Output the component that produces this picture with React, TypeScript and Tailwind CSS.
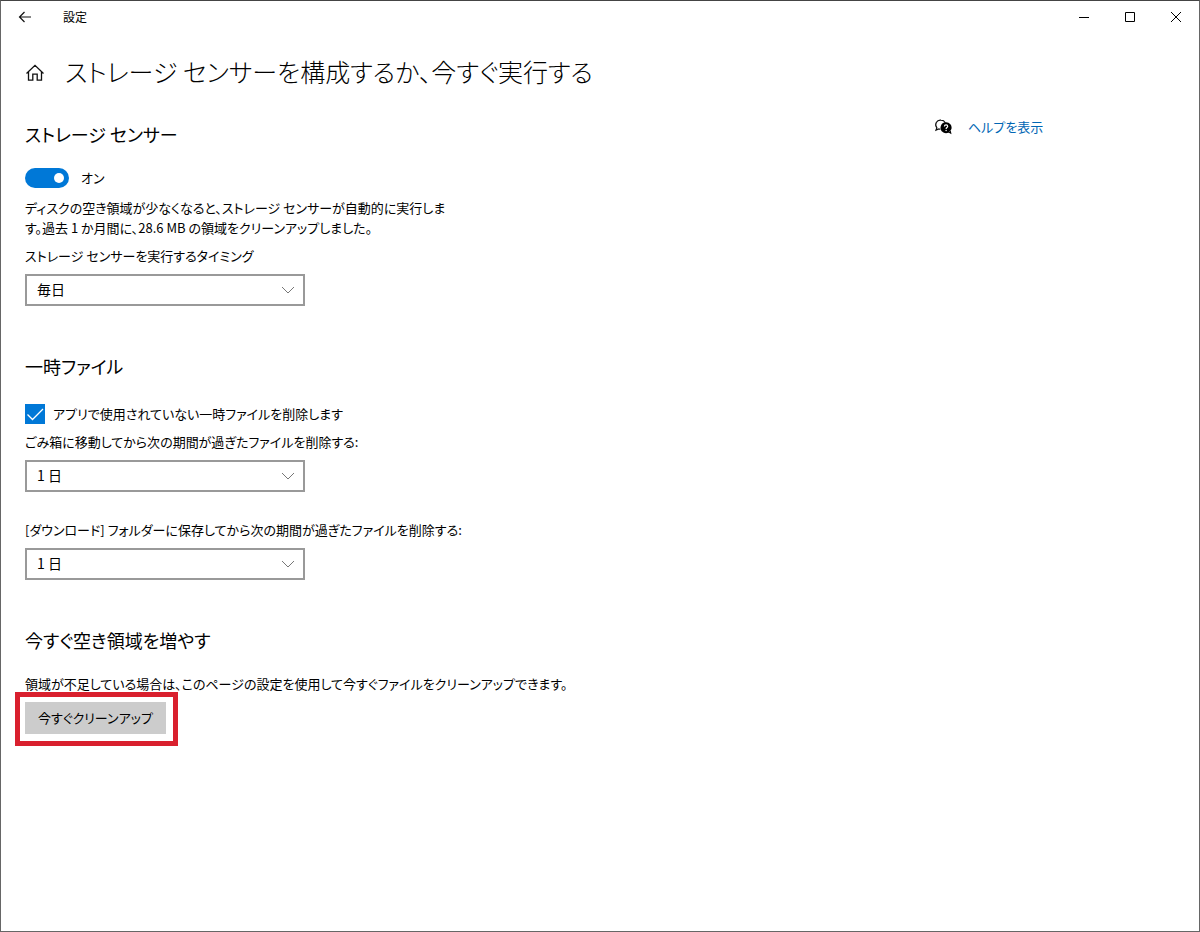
import { useState, type ReactNode } from 'react';

const intervals = ['毎日', '毎週', '毎月', 'ディスク領域の不足時'];
const ages = ['なし', '1 日', '14 日', '30 日', '60 日'];

function SelectField({ id, label, options, initial }: { id: string; label: string; options: string[]; initial: string }) {
  return (
    <div>
      <label htmlFor={id} className="block text-[13px]/5">
        {label}
      </label>
      <div className="relative mt-2 w-70 max-w-full">
        <select
          id={id}
          defaultValue={initial}
          className="block h-8 w-full appearance-none border-2 border-[#999999] bg-white pr-8 pb-0.5 pl-2.5 text-sm/5"
        >
          {options.map((o) => (
            <option key={o}>{o}</option>
          ))}
        </select>
        <svg
          viewBox="0 0 14 8"
          className="pointer-events-none absolute top-3 right-2.5 h-2 w-3.5"
          fill="none"
          stroke="#777"
          aria-hidden="true"
        >
          <path d="M1 1l6 6 6-6" />
        </svg>
      </div>
    </div>
  );
}

function SectionTitle({ children }: { children: ReactNode }) {
  return <h2 className="text-lg/6">{children}</h2>;
}

function TitleBar() {
  return (
    <header className="flex h-8 items-center">
      <button type="button" aria-label="戻る" className="flex h-8 w-12 items-center justify-center">
        <svg viewBox="0 0 14 12" className="h-3 w-3.5" fill="none" stroke="#111" strokeWidth="1.200" aria-hidden="true">
          <path d="M13 6H1.500M6.500 1l-5 5 5 5" />
        </svg>
      </button>
      <span className="ml-3.5 text-xs">設定</span>
      <div className="ml-auto flex">
        <button type="button" aria-label="最小化" className="flex h-8 w-[46px] items-center justify-center">
          <svg viewBox="0 0 11 11" className="size-[11px]" fill="none" stroke="#000" aria-hidden="true">
            <path d="M0 5.500h10" />
          </svg>
        </button>
        <button type="button" aria-label="最大化" className="flex h-8 w-[46px] items-center justify-center">
          <svg viewBox="0 0 11 11" className="size-[11px]" fill="none" stroke="#000" aria-hidden="true">
            <path d="M.5.5h9v9H.5z" />
          </svg>
        </button>
        <button type="button" aria-label="閉じる" className="flex h-8 w-[46px] items-center justify-center">
          <svg viewBox="0 0 11 11" className="size-[11px]" fill="none" stroke="#000" aria-hidden="true">
            <path d="M0 0l10 10M10 0L0 10" />
          </svg>
        </button>
      </div>
    </header>
  );
}

function HelpIcon() {
  return (
    <svg viewBox="0 0 18 18" className="size-[18px] shrink-0" aria-hidden="true">
      <path
        d="M6.500 11.200c-.6 0-1.200 0-1.700-.2L2 12.200l.9-2.400A4.600 4.600 0 0 1 7 2.200c2 0 3.500 1 4.300 2.500"
        fill="none"
        stroke="#111"
        strokeWidth="1.200"
      />
      <path d="M12 4.200a5.500 5.500 0 1 1-2.600 10.300A5.500 5.500 0 0 1 12 4.200zM14.500 14.600l3 1.600-.8-4z" fill="#000" />
      <path d="M10.400 8.400c0-2.100 3.300-2.100 3.300 0 0 1.200-1.600 1.200-1.600 2.500" fill="none" stroke="#fff" strokeWidth="1.200" />
      <circle cx="12.100" cy="12.500" r=".7" fill="#fff" />
    </svg>
  );
}

export default function App() {
  const [sense, setSense] = useState(true);
  const [cleanTemp, setCleanTemp] = useState(true);

  return (
    <div className="min-h-screen border border-[#666] border-t-[#444] bg-white font-['Noto_Sans_CJK_JP','Noto_Sans',sans-serif] text-black [font-feature-settings:'palt']">
      <TitleBar />

      <div className="flex items-center gap-5 px-6 pt-5">
        <a href="#home" aria-label="ホーム" className="shrink-0">
          <svg viewBox="0 0 20 20" className="size-5" fill="none" stroke="#111" strokeWidth="1.300" aria-hidden="true">
            <path d="M1.500 10.500L10 2.300l8.500 8.200M3.500 8.800v8.400h4.300v-6h4.400v6h4.300V8.800" />
          </svg>
        </a>
        <h1 className="pb-1 text-[25px]/9 font-light">ストレージ センサーを構成するか、今すぐ実行する</h1>
      </div>

      <div className="grid grid-cols-[1fr_265px] pt-6">
        <main className="px-6 pb-12">
          <section className="pt-[5px]">
            <SectionTitle>ストレージ センサー</SectionTitle>
            <label className="mt-5.5 flex h-5 w-fit items-center gap-3 text-[13px]/5">
              <span className="relative flex">
                <input
                  type="checkbox"
                  role="switch"
                  checked={sense}
                  onChange={(e) => setSense(e.target.checked)}
                  className="peer h-5 w-11 appearance-none rounded-full bg-[#999] checked:bg-[#0078d7]"
                />
                <span className="pointer-events-none absolute top-1.25 left-1.25 size-2.5 rounded-full bg-white peer-checked:left-7.25" />
              </span>
              {sense ? 'オン' : 'オフ'}
            </label>
            <p className="mt-2.5 mb-2 max-w-[430px] text-[13px]/5">
              ディスクの空き領域が少なくなると、ストレージ センサーが自動的に実行します。過去 1 か月間に、28.6 MB の領域をクリーンアップしました。
            </p>
            <SelectField id="interval" label="ストレージ センサーを実行するタイミング" options={intervals} initial="毎日" />
          </section>

          <section className="mt-12">
            <SectionTitle>一時ファイル</SectionTitle>
            <label className="mt-6.5 mb-2 flex w-fit items-center gap-2 text-[13px]/5">
              <span className="relative flex">
                <input
                  type="checkbox"
                  checked={cleanTemp}
                  onChange={(e) => setCleanTemp(e.target.checked)}
                  className="peer size-5 appearance-none border-2 border-[#666] checked:border-[#0078d7] checked:bg-[#0078d7]"
                />
                <svg
                  viewBox="0 0 20 20"
                  className="pointer-events-none absolute inset-0 hidden size-5 peer-checked:block"
                  fill="none"
                  stroke="#fff"
                  strokeWidth="1.300"
                  aria-hidden="true"
                >
                  <path d="M2.500 10.500l5 5L18 5" />
                </svg>
              </span>
              アプリで使用されていない一時ファイルを削除します
            </label>
            <SelectField id="trash-age" label="ごみ箱に移動してから次の期間が過ぎたファイルを削除する:" options={ages} initial="1 日" />
            <div className="mt-7">
              <SelectField
                id="downloads-age"
                label="[ダウンロード] フォルダーに保存してから次の期間が過ぎたファイルを削除する:"
                options={ages}
                initial="1 日"
              />
            </div>
          </section>

          <section className="mt-12">
            <SectionTitle>今すぐ空き領域を増やす</SectionTitle>
            <p className="mt-5.5 text-[13px]/5">
              領域が不足している場合は、このページの設定を使用して今すぐファイルをクリーンアップできます。
            </p>
            <div className="relative mt-2 w-fit">
              <button type="button" className="block h-8 w-[141px] bg-[#ccc] text-[13px]/5">
                今すぐクリーンアップ
              </button>
              <span className="pointer-events-none absolute -top-2.5 -right-3 -bottom-3 -left-2.5 border-5 border-[#d9202e]" />
            </div>
          </section>
        </main>

        <aside>
          <a href="#help" className="flex w-fit items-center gap-4 text-[13px]/5 text-[#0066b4]">
            <HelpIcon />
            ヘルプを表示
          </a>
        </aside>
      </div>
    </div>
  );
}
